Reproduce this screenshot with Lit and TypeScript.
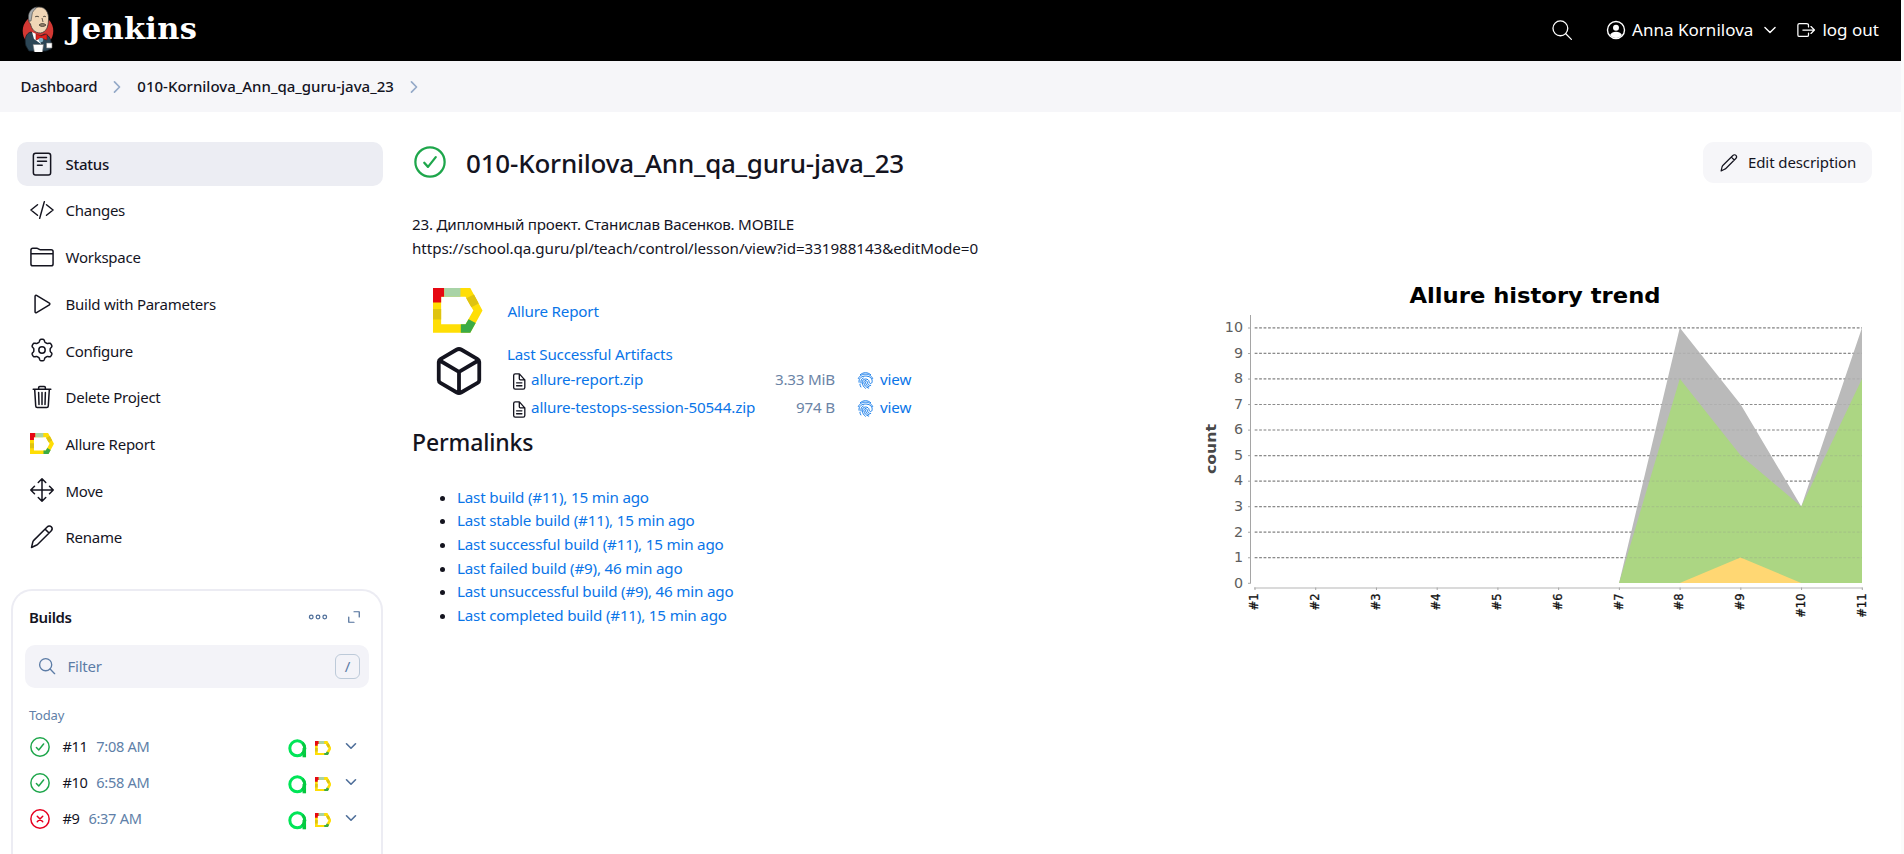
import { LitElement, html, svg, css, nothing } from "lit";
import type { SVGTemplateResult } from "lit";
import { customElement, property } from "lit/decorators.js";
import { classMap } from "lit/directives/class-map.js";

const gearPath = (() => {
  const pts: string[] = [];
  for (let i = 0; i < 144; i++) {
    const a = (i / 144) * Math.PI * 2;
    const wave = Math.tanh(1.9 * Math.cos(6 * (a - Math.PI / 2))) / Math.tanh(1.9);
    const r = 202 + 28 * wave;
    pts.push(`${(256 + r * Math.cos(a)).toFixed(1)} ${(256 + r * Math.sin(a)).toFixed(1)}`);
  }
  return `M${pts.join("L")}Z`;
})();

const icons: Record<string, SVGTemplateResult> = {
  status: svg`<rect x="72" y="24" width="368" height="464" rx="48"/><path d="M160 116h192M160 198h192M160 282h100"/>`,
  code: svg`<path d="M160 368L20 256l140-112M352 368l140-112-140-112M306 78L206 434"/>`,
  folder: svg`<path d="M452 444H60a40 40 0 01-40-40V108a40 40 0 0140-40h88a40 40 0 0122 7l28 18a40 40 0 0022 7H452a40 40 0 0140 40v264a40 40 0 01-40 40zM20 186h472"/>`,
  play: svg`<path d="M108 92v328c0 17 17 28 31 20l275-167c12-7 12-27 0-34L139 72c-14-8-31 3-31 20z"/>`,
  gear: svg`<path d="${gearPath}"/><circle cx="256" cy="256" r="68"/>`,
  trash: svg`<path d="M100 96l22 352c1 18 14 32 32 32h204c18 0 31-14 32-32l22-352M68 92h376M184 92V56a24 24 0 0124-24h96a24 24 0 0124 24v36M256 160v256M184 160l8 256M328 160l-8 256"/>`,
  move: svg`<path d="M176 96l80-80 80 80M256 16v480M176 416l80 80 80-80M416 176l80 80-80 80M96 176l-80 80 80 80M16 256h480"/>`,
  pencil: svg`<path d="M32 480l28-118c4-14 10-24 20-34L366 42c26-26 64-28 88-4 24 26 22 64-4 90L166 412c-10 10-22 16-34 20L32 480zM322 88l84 84"/>`,
  cube: svg`<path d="M448 341.4V170.6A32 32 0 00432 143l-152-88.500a48 48 0 00-48 0L80 143A32 32 0 0064 170.600v170.800A32 32 0 0080 369l152 88.500a48 48 0 0048 0l152-88.500A32 32 0 00448 341.400zM69 154l187 110 187-110M256 464V264"/>`,
  logout: svg`<path d="M320 336v46a40 40 0 01-40 40H88a40 40 0 01-40-40V130a40 40 0 0140-40h176c22 0 56 18 56 40v46M384 344l88-88-88-88M176 256h290"/>`,
  search: svg`<circle cx="218" cy="218" r="172"/><path d="M344 344l130 130"/>`,
  chevron: svg`<path d="M112 184l144 144 144-144"/>`,
  right: svg`<path d="M184 112l144 144-144 144"/>`,
  doc: svg`<path d="M416 221V440a48 48 0 01-48 48H128a48 48 0 01-48-48V72a48 48 0 0148-48h108a32 32 0 0123 9l148 165a32 32 0 019 23zM250 36v140a32 32 0 0032 32h124M168 296h160M168 384h160"/>`,
  user: svg`<circle cx="256" cy="256" r="218"/><circle cx="256" cy="196" r="76" fill="currentColor" stroke="none"/><path d="M104 384c30-62 86-84 152-84s122 22 152 84c-40 50-94 78-152 78s-112-28-152-78z" fill="currentColor" stroke="none"/>`,
  dots: svg`<circle cx="64" cy="256" r="52"/><circle cx="256" cy="256" r="52"/><circle cx="448" cy="256" r="52"/>`,
  expand: svg`<path d="M256 32h224v224M32 256v224h224"/>`,
  ok: svg`<circle cx="256" cy="256" r="234"/><path d="M164 268l60 66 124-156"/>`,
  bad: svg`<circle cx="256" cy="256" r="234"/><path d="M186 186l140 140M326 186l-140 140"/>`,
  finger: svg`<path d="M100 80C190 0 322 0 412 80M40 196C92 84 178 68 256 68s164 16 216 128M62 310C40 180 150 122 256 122s210 48 200 168c-2 34-20 56-48 56s-42-22-44-50c-4-56-48-84-106-84s-108 46-100 116c6 60 36 116 96 164M256 262c34 0 54 20 58 48 8 70 42 100 98 96M256 262c-30 0-54 24-50 56 8 76 62 146 146 168M258 316c8 70 44 116 104 124M116 450c-20-34-26-60-28-80M118 330c-8-80 14-124 70-146"/>`,
};

@customElement("j-icon")
export class JIcon extends LitElement {
  @property() name = "";
  @property({ type: Number }) size = 24;
  @property({ type: Number }) weight = 32;
  static styles = css`
    :host { display: inline-flex; flex: none; }
    svg { display: block; fill: none; stroke: currentColor; stroke-linecap: round; stroke-linejoin: round; overflow: visible; }
  `;
  render() {
    return html`<svg width=${this.size} height=${this.size} viewBox="0 0 512 512" stroke-width=${this.weight}>${icons[this.name] ?? nothing}</svg>`;
  }
}

@customElement("allure-logo")
export class AllureLogo extends LitElement {
  @property({ type: Number }) width = 24;
  static styles = css`:host { display: inline-flex; flex: none; } svg { display: block; }`;
  render() {
    return html`<svg width=${this.width} height=${(this.width * 132) / 146} viewBox="0 0 146 132">
      <path fill="#ffde05" fill-rule="evenodd" d="M0 0H110L146 66L110 132H0ZM24 26V107H96L119 66L96 26Z"/>
      <path fill="#e60812" d="M0 0H33V26H24V43H0Z"/>
      <path fill="#a8d3a6" d="M33 0H81V26H33Z"/>
      <path fill="#dfc310" d="M0 62H24V93H0ZM98 30L121 19L135 46L113 57Z"/>
      <path fill="#3bab46" d="M82 107H96L105 92L126 103L110 132H82Z"/>
    </svg>`;
  }
}

@customElement("jenkins-header")
export class JenkinsHeader extends LitElement {
  static styles = css`
    :host { display: flex; height: 61px; background: #000; color: #fff; align-items: center; box-sizing: border-box; padding: 0 22px 0 21px; }
    .mark { display: block; margin-top: -3px; }
    .word { font: bold 30.500px "DejaVu Serif", serif; letter-spacing: .3px; margin: -5px 0 0 12px; line-height: 40px; }
    .grow { flex: 1; }
    .item { display: flex; align-items: center; font-size: 17px; letter-spacing: .02px; height: 30px; margin-top: -2px; }
    .find { margin-right: 33px; }
    .user { gap: 6px; }
    .user .arrow { margin-left: 2px; }
    .out { margin-left: 17px; gap: 6px; }
  `;
  render() {
    return html`
      <svg class="mark" width="34" height="46" viewBox="0 0 34 46">
        <ellipse cx="17" cy="25" rx="15.300" ry="16" fill="#d33833"/>
        <path d="M5 40C3 33 5 27 10 26l7 5 7-3c5 2 7 6 6 15l-5 2H8z" fill="#2c4656" stroke="#15222b" stroke-width=".8"/>
        <path d="M8 12C8 5 12 1 18 1c7 0 10 6 9.500 13-.3 7-2 12-8 13-6 0-9-4-10-9-2-2-2-4-1.500-6z" fill="#f0d6b7" stroke="#3a3a3a" stroke-width=".8"/>
        <path d="M8 15C6 7 10 2 16 1c-2 3-5 4-5 8l-1 6z" fill="#a9adb0" stroke="#444" stroke-width=".6"/>
        <path d="M14 11c1-1 3-1 4 0M22 11c1-1 2-1 3 0M21 12l1 4M18 19c2-2 5-2 7 0-2 2-5 2-7 0z" fill="#8d7a66" stroke="#3f3830" stroke-width=".8"/>
        <path d="M11 26l6 3 3 9-7-5z" fill="#fff"/>
        <path d="M15 28l5 2 6-2v6l-6-2-5 2z" fill="#e0201c" stroke="#7a1212" stroke-width=".6"/>
        <circle cx="20" cy="34" r="2.300" fill="#81b0c4"/>
        <path d="M12 38.500h10.500l-1.500 11h-7zM25.500 37h5.500v5h-5.500z" fill="#fff" stroke="#777" stroke-width=".6"/>
      </svg>
      <span class="word">Jenkins</span>
      <span class="grow"></span>
      <span class="item find"><j-icon name="search" .size=${22} .weight=${30}></j-icon></span>
      <span class="item user"><j-icon name="user" .size=${20} .weight=${36}></j-icon><span>Anna Kornilova</span><j-icon class="arrow" name="chevron" .size=${18} .weight=${40}></j-icon></span>
      <span class="item out"><j-icon name="logout" .size=${20} .weight=${32}></j-icon><span>log out</span></span>
    `;
  }
}

interface Task { icon: string; label: string; active?: boolean; }
const tasks: Task[] = [
  { icon: "status", label: "Status", active: true },
  { icon: "code", label: "Changes" },
  { icon: "folder", label: "Workspace" },
  { icon: "play", label: "Build with Parameters" },
  { icon: "gear", label: "Configure" },
  { icon: "trash", label: "Delete Project" },
  { icon: "allure", label: "Allure Report" },
  { icon: "move", label: "Move" },
  { icon: "pencil", label: "Rename" },
];

interface Build { id: string; time: string; ok: boolean; }
const builds: Build[] = [
  { id: "#11", time: "7:08 AM", ok: true },
  { id: "#10", time: "6:58 AM", ok: true },
  { id: "#9", time: "6:37 AM", ok: false },
];

@customElement("side-panel")
export class SidePanel extends LitElement {
  static styles = css`
    :host { display: flex; flex-direction: column; width: 383px; flex: none; padding-top: 30px; box-sizing: border-box; font-size: 15px; letter-spacing: -.25px; }
    .tasks { display: flex; flex-direction: column; gap: 2.700px; padding-left: 17px; }
    .task { display: flex; align-items: center; gap: 12px; height: 44px; border-radius: 10px; padding: 0 0 1px 12.500px; box-sizing: border-box; }
    .task.active { background: #ecedf3; font-weight: 500; }
    .task span { padding-top: 1px; }
    .card { margin: 29px 0 0 11px; flex: 1; box-sizing: border-box; border: 2px solid #ececf3; border-bottom: 0; border-radius: 21px 21px 0 0; padding: 0 12px; }
    .head { display: flex; align-items: center; height: 54px; padding: 0 9px 2px 4px; box-sizing: border-box; color: #4f6f9a; }
    .head b { flex: 1; font-weight: 600; letter-spacing: -.35px; color: #14141f; padding-top: 1px; }
    .head .exp { margin-left: 21px; }
    .filter { display: flex; align-items: center; height: 43px; border-radius: 10px; background: #f3f3f8; padding: 0 9px 0 12.500px; color: #5c7ca6; }
    .filter span { flex: 1; margin-left: 12px; padding-top: 1px; }
    .key { width: 23px; height: 23px; border: 1px solid #bdcad9; border-radius: 6px; display: grid; place-items: center; font: 15px "Noto Sans", sans-serif; line-height: 20px; }
    .day { font-size: 13px; letter-spacing: -.2px; color: #607fa8; padding: 16px 0 0 4px; line-height: 22px; height: 41px; box-sizing: border-box; }
    .row { display: flex; align-items: center; height: 36px; padding: 0 10px 0 4.500px; font-size: 14.600px; letter-spacing: -.45px; }
    .good { color: #1ea64b; } .fail { color: #e6001f; }
    .id { margin-left: 13px; padding-top: 1px; }
    .time { flex: 1; margin-left: 9px; color: #607fa8; padding-top: 1px; letter-spacing: -.3px; }
    .ops { margin: 4px 8px 0 0; } .rep { margin: 3px 12px 0 0; }
    .row .arrow { color: #4f6f9a; margin-top: -1px; }
  `;
  render() {
    return html`
      <nav class="tasks">${tasks.map(t => html`
        <div class=${classMap({ task: true, active: !!t.active })}>
          ${t.icon === "allure" ? html`<allure-logo .width=${24}></allure-logo>` : html`<j-icon name=${t.icon} .size=${24}></j-icon>`}
          <span>${t.label}</span>
        </div>`)}
      </nav>
      <section class="card">
        <div class="head"><b>Builds</b><j-icon name="dots" .size=${18} .weight=${36}></j-icon><j-icon class="exp" name="expand" .size=${12} .weight=${52}></j-icon></div>
        <div class="filter"><j-icon name="search" .size=${18} .weight=${38}></j-icon><span>Filter</span><div class="key">/</div></div>
        <div class="day">Today</div>
        ${builds.map(b => html`
          <div class="row">
            <j-icon class=${b.ok ? "good" : "fail"} name=${b.ok ? "ok" : "bad"} .size=${20} .weight=${38}></j-icon>
            <span class="id">${b.id}</span><span class="time">${b.time}</span>
            <svg class="ops" width="19" height="19" viewBox="0 0 19 19"><path d="M16.300 9V18.300" stroke="#08c43d" stroke-width="3.500"/><circle cx="9.300" cy="9.300" r="7.500" fill="none" stroke="#00e557" stroke-width="3"/><path d="M14.500 4A7.500 7.500 0 0 1 14 15" fill="none" stroke="#06c940" stroke-width="3"/></svg>
            <allure-logo class="rep" .width=${16.5}></allure-logo>
            <j-icon class="arrow" name="chevron" .size=${16} .weight=${52}></j-icon>
          </div>`)}
      </section>
    `;
  }
}

const X0 = 1254.7, STEP = 60.73, Y0 = 583, UNIT = 25.53;
const px = (i: number) => X0 + (i - 1) * STEP;
const py = (v: number) => Y0 - v * UNIT;
const area = (pts: [number, number][]) => pts.map(([i, v]) => `${px(i)},${py(v)}`).join(" ");

@customElement("trend-chart")
export class TrendChart extends LitElement {
  static styles = css`
    :host { display: block; }
    svg { display: block; font-family: "DejaVu Sans", sans-serif; }
    .title { font-weight: bold; font-size: 22px; }
    .axis { font-weight: bold; font-size: 14px; fill: #484848; }
    .num { font-size: 14.300px; fill: #5e5e5e; text-anchor: end; }
    .tick { font-size: 11.500px; fill: #111; text-anchor: end; stroke: #111; stroke-width: .3px; }
    .grid { stroke: #8b8b8b; stroke-width: 1.200; stroke-dasharray: 2.700 1.760; }
    .over { opacity: .22; }
    .line { stroke: #a5a5a5; stroke-width: 1; }
    .base { stroke: #dadada; stroke-width: 2; }
  `;
  render() {
    const nums = Array.from({ length: 11 }, (_, i) => i);
    const lines = nums.slice(1).map(v => svg`<line class="grid" x1=${X0} x2=${px(11)} y1=${py(v) + .2} y2=${py(v) + .2}/>`);
    return html`<svg width="690" height="345" viewBox="1195 275 690 345">
      <text class="title" x="1409.500" y="303.300" textLength="251" lengthAdjust="spacingAndGlyphs">Allure history trend</text>
      <text class="axis" transform="translate(1215.600 474) rotate(-90)" textLength="50" lengthAdjust="spacingAndGlyphs">count</text>
      ${lines}
      <polygon fill="#bababa" points=${area([[7, 0], [8, 10], [9, 7], [10, 3], [11, 10], [11, 0]])}/>
      <polygon fill="#acd683" points=${area([[7, 0], [8, 8], [9, 5], [10, 3], [11, 8], [11, 0]])}/>
      <polygon fill="#ffd773" points=${area([[8, 0], [9, 1], [10, 0]])}/>
      <g class="over">${lines}</g>
      <line class="line" x1="1250.500" x2="1250.500" y1="315" y2="583.500"/>
      <line class="base" x1="1254" x2="1862.500" y1="588" y2="588"/>
      ${nums.map(v => svg`<line class="line" x1="1248" x2="1250.500" y1=${py(v) + .3} y2=${py(v) + .3}/><text class="num" x="1243" y=${py(v) + 4.6}>${v}</text>`)}
      ${nums.map(v => svg`<line class="line" x1=${px(v + 1) + .3} x2=${px(v + 1) + .3} y1="587.500" y2="590"/><text class="tick" transform="translate(${px(v + 1) + 3.6} 593.500) rotate(-90)">#${v + 1}</text>`)}
    </svg>`;
  }
}

const files = [
  { name: "allure-report.zip", size: "3.33 MiB" },
  { name: "allure-testops-session-50544.zip", size: "974 B" },
];
const permalinks = [
  "Last build (#11), 15 min ago",
  "Last stable build (#11), 15 min ago",
  "Last successful build (#11), 15 min ago",
  "Last failed build (#9), 46 min ago",
  "Last unsuccessful build (#9), 46 min ago",
  "Last completed build (#11), 15 min ago",
];

@customElement("app-root")
export class AppRoot extends LitElement {
  static styles = css`
    :host { display: flex; flex-direction: column; height: 854px; overflow: hidden; box-sizing: border-box; border-right: 3px solid #fbfbfb; background: #fff; color: #14141f; font: 15.200px/1.5 "Noto Sans", "Segoe UI", sans-serif; }
    .crumbs { flex: none; height: 51px; background: #f6f6f9; display: flex; align-items: center; padding: 0 20.500px; font-size: 15px; font-weight: 500; }
    .crumbs .first { letter-spacing: -.2px; }
    .crumbs j-icon { color: #94a9c8; margin: 0 11px; }
    .body { flex: 1; display: flex; min-height: 0; }
    main { flex: 1; padding: 30px 29px 0 29px; min-width: 0; }
    .top { display: flex; align-items: center; height: 41px; }
    .top .ok { color: #1ea64b; margin: 0 20px 1px 2px; }
    h1 { flex: 1; margin: 0; font-size: 26px; font-weight: 500; letter-spacing: -.2px; line-height: 40px; }
    .edit { display: flex; align-items: center; gap: 10px; height: 41px; width: 169px; box-sizing: border-box; padding-left: 17px; background: #f6f6f9; border-radius: 11px; font-size: 15px; letter-spacing: -.1px; }
    .desc { margin-top: 29px; line-height: 24px; height: 48.500px; }
    .desc div:first-child { letter-spacing: -.22px; } .desc div:last-child { letter-spacing: -.07px; }
    a { color: #0a75e8; text-decoration: none; letter-spacing: -.19px; }
    .cols { display: flex; justify-content: space-between; }
    .info { display: flex; flex-direction: column; }
    .report { display: flex; align-items: center; gap: 25px; margin: 28px 0 0 21px; height: 44px; }
    .report a { padding-top: 2px; }
    .arts { display: grid; grid-template-columns: 50px auto; column-gap: 24px; margin: 8px 0 0 21px; align-items: start; }
    .arts .cube { margin: 3px 0 0 -1px; }
    .arts .last { display: block; line-height: 26px; }
    .file { display: grid; grid-template-columns: 20px 237px 67px 23px auto; align-items: center; height: 28px; padding-left: 4px; }
    .file:nth-child(2) { margin-top: -1px; }
    .file a { letter-spacing: -.13px; }
    .file .size { text-align: right; color: #6b84a6; letter-spacing: -.2px; }
    .file .fp { color: #0a75e8; margin: 2px 0 0 22px; }
    .file .view { margin-left: 22px; } .file .doc { margin: 4px 0 0 0; }
    h2 { margin: 0; font-size: 23px; font-weight: 500; line-height: 40px; letter-spacing: -.15px; }
    ul { margin: 24px 0 0; padding-left: 45px; line-height: 23.700px; }
    trend-chart { margin-top: 14px; margin-right: -13px; }
  `;
  render() {
    return html`
      <jenkins-header></jenkins-header>
      <div class="crumbs">
        <span class="first">Dashboard</span><j-icon name="right" .size=${18} .weight=${48}></j-icon>
        <span>010-Kornilova_Ann_qa_guru-java_23</span><j-icon name="right" .size=${18} .weight=${48}></j-icon>
      </div>
      <div class="body">
        <side-panel></side-panel>
        <main>
          <div class="top">
            <j-icon class="ok" name="ok" .size=${32} .weight=${36}></j-icon>
            <h1>010-Kornilova_Ann_qa_guru-java_23</h1>
            <div class="edit"><j-icon name="pencil" .size=${18} .weight=${34}></j-icon><span>Edit description</span></div>
          </div>
          <div class="desc">
            <div>23. Дипломный проект. Станислав Васенков. MOBILE</div>
            <div>https://school.qa.guru/pl/teach/control/lesson/view?id=331988143&amp;editMode=0</div>
          </div>
          <div class="cols">
            <div class="info">
              <div class="report"><allure-logo .width=${49.5}></allure-logo><a>Allure Report</a></div>
              <div class="arts">
                <j-icon class="cube" name="cube" .size=${54} .weight=${36}></j-icon>
                <div>
                  <a class="last">Last Successful Artifacts</a>
                  ${files.map(f => html`<div class="file">
                    <j-icon class="doc" name="doc" .size=${17} .weight=${40}></j-icon>
                    <a>${f.name}</a><span class="size">${f.size}</span>
                    <j-icon class="fp" name="finger" .size=${17} .weight=${28}></j-icon><a class="view">view</a>
                  </div>`)}
                </div>
              </div>
              <h2>Permalinks</h2>
              <ul>${permalinks.map(p => html`<li><a>${p}</a></li>`)}</ul>
            </div>
            <trend-chart></trend-chart>
          </div>
        </main>
      </div>
    `;
  }
}
